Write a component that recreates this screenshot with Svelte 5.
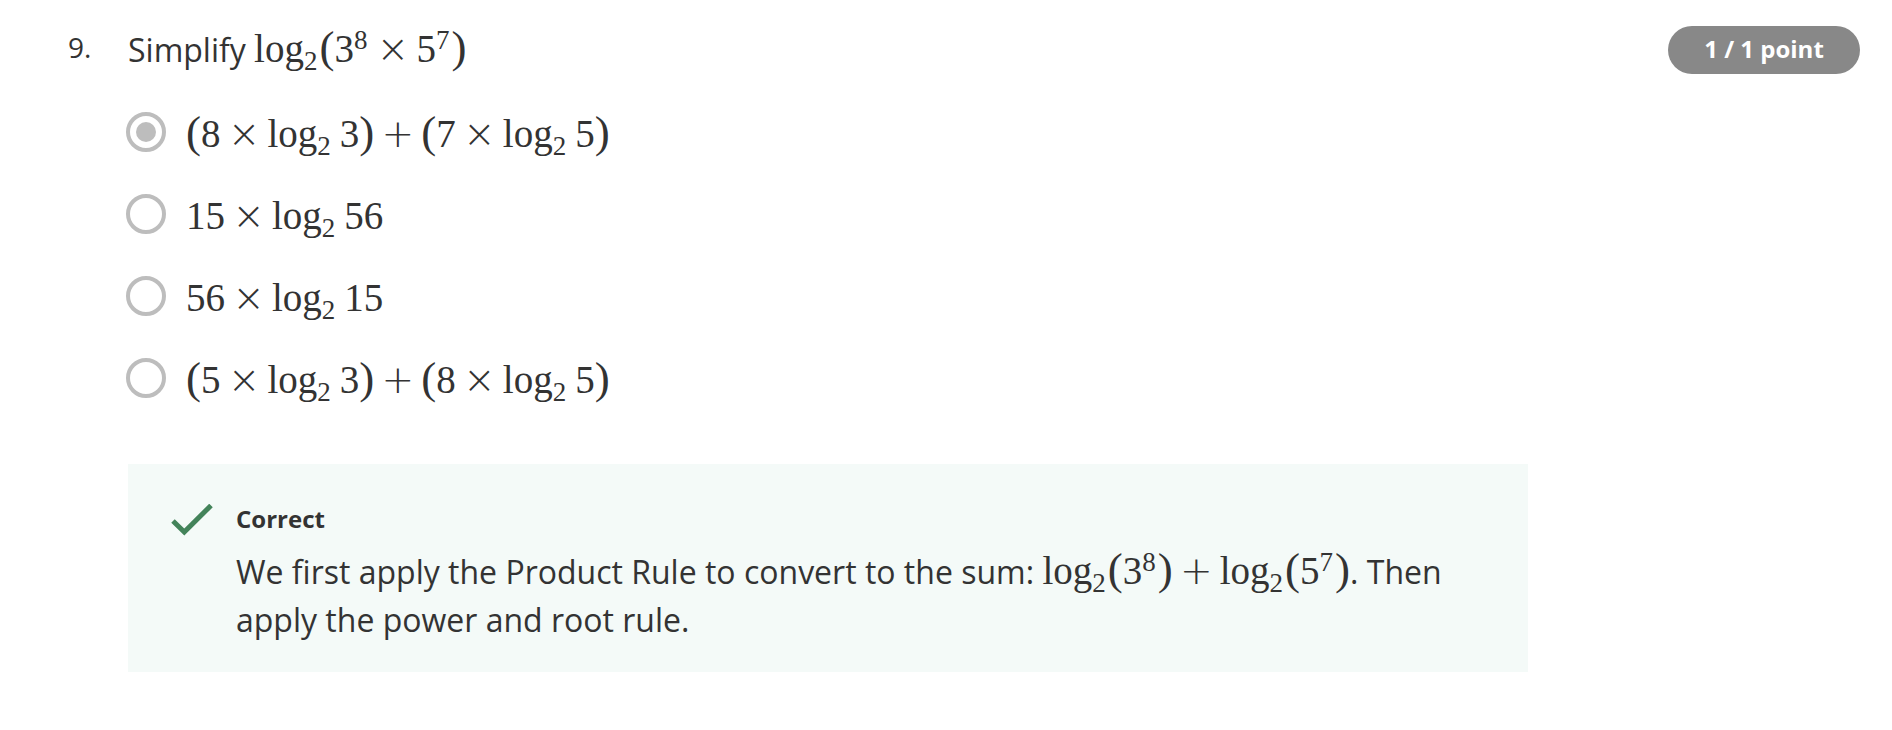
<script>
  const question = ['log', '_2', '(', '3', '^8', '×', '5', '^7', ')'];
  const options = [
    ['(', '8', '×', 'log', '_2', ' ', '3', ')', '+', '(', '7', '×', 'log', '_2', ' ', '5', ')'],
    ['15', '×', 'log', '_2', ' ', '56'],
    ['56', '×', 'log', '_2', ' ', '15'],
    ['(', '5', '×', 'log', '_2', ' ', '3', ')', '+', '(', '8', '×', 'log', '_2', ' ', '5', ')']
  ];
  const sum = ['log', '_2', '(', '3', '^8', ')', '+', 'log', '_2', '(', '5', '^7', ')'];
  let selected = $state(0);
</script>

{#snippet math(tokens)}
  <span class="math">{#each tokens as t}{#if t === ' '}<span class="thin"></span>{:else if t[0] === '_'}<sub>{t.slice(1)}</sub>{:else if t[0] === '^'}<sup>{t.slice(1)}</sup>{:else if t === '×' || t === '+'}<span class="op">{t}</span>{:else if t === '(' || t === ')'}<span class="paren">{t}</span>{:else}<span>{t}</span>{/if}{/each}</span>
{/snippet}

<main class="question">
  <div class="number">9.</div>
  <div class="body">
    <fieldset>
      <legend>Simplify {@render math(question)}</legend>
      {#each options as option, i}
        <label class="option">
          <input type="radio" name="answer" value={i} bind:group={selected} />
          {@render math(option)}
        </label>
      {/each}
    </fieldset>
    <section class="feedback">
      <svg class="check" viewBox="0 0 42 32" aria-hidden="true">
        <path d="M2 17 13.300 28 40 1.500" fill="none" stroke="#43835a" stroke-width="5" />
      </svg>
      <div class="message">
        <h2>Correct</h2>
        <p>We first apply the Product Rule to convert to the sum: {@render math(sum)}. Then apply the power and root rule.</p>
      </div>
    </section>
  </div>
  <div class="points">1 / 1 point</div>
</main>

<style>
  :global(body) {
    background: #fff;
    color: #333;
    font-family: "Open Sans", "Noto Sans", sans-serif;
  }
  .question {
    display: grid;
    grid-template-columns: 60px minmax(0, 1400px) 1fr;
    align-items: start;
    padding: 26px 32px 56px 68px;
  }
  .number {
    font-size: 28px;
    line-height: 42px;
  }
  fieldset {
    margin: 0;
    padding: 0;
    border: 0;
    min-width: 0;
  }
  legend {
    padding: 0;
    font-size: 32px;
    line-height: 48px;
  }
  .math {
    font-family: "Liberation Serif", serif;
    font-size: 39px;
    line-height: 1;
    white-space: nowrap;
  }
  .thin {
    display: inline-block;
    width: 7px;
  }
  sub,
  sup {
    font-size: 27px;
    line-height: 0;
    margin-right: 2px;
    position: relative;
    vertical-align: baseline;
  }
  sub {
    top: 8px;
  }
  sup {
    top: -13px;
  }
  .paren {
    font-size: 45px;
    line-height: 0;
  }
  .op {
    display: inline-block;
    width: 33px;
    margin: 0 7px;
    text-align: center;
    font-family: "DejaVu Sans", "DejaVu Sans Light", sans-serif;
    font-weight: 200;
    line-height: 0;
  }
  .option {
    display: flex;
    align-items: center;
    gap: 20px;
    height: 40px;
    margin-top: 42px;
  }
  .option .math {
    padding-top: 2px;
  }
  legend + .option {
    margin-top: 38px;
  }
  input {
    appearance: none;
    flex: none;
    display: grid;
    place-items: center;
    width: 40px;
    height: 40px;
    margin: 0 0 0 -2px;
    border: 4px solid #bdbdbd;
    border-radius: 50%;
    background: #fff;
  }
  input:checked::before {
    content: "";
    width: 20px;
    height: 20px;
    border-radius: 50%;
    background: #bdbdbd;
  }
  .feedback {
    display: flex;
    gap: 23px;
    margin-top: 66px;
    padding: 36px 43px 28px;
    background: #f4faf8;
  }
  .check {
    flex: none;
    width: 42px;
    height: 32px;
    margin-top: 4px;
  }
  h2 {
    margin: 0;
    font-size: 24px;
    line-height: 38px;
  }
  p {
    margin: 10px 0 0;
    font-size: 32px;
    line-height: 48px;
  }
  .points {
    justify-self: end;
    box-sizing: border-box;
    min-width: 192px;
    padding: 0 32px 2px;
    border-radius: 24px;
    background: #888;
    color: #fff;
    font-size: 24px;
    font-weight: 700;
    line-height: 46px;
    text-align: center;
    white-space: nowrap;
  }
</style>
